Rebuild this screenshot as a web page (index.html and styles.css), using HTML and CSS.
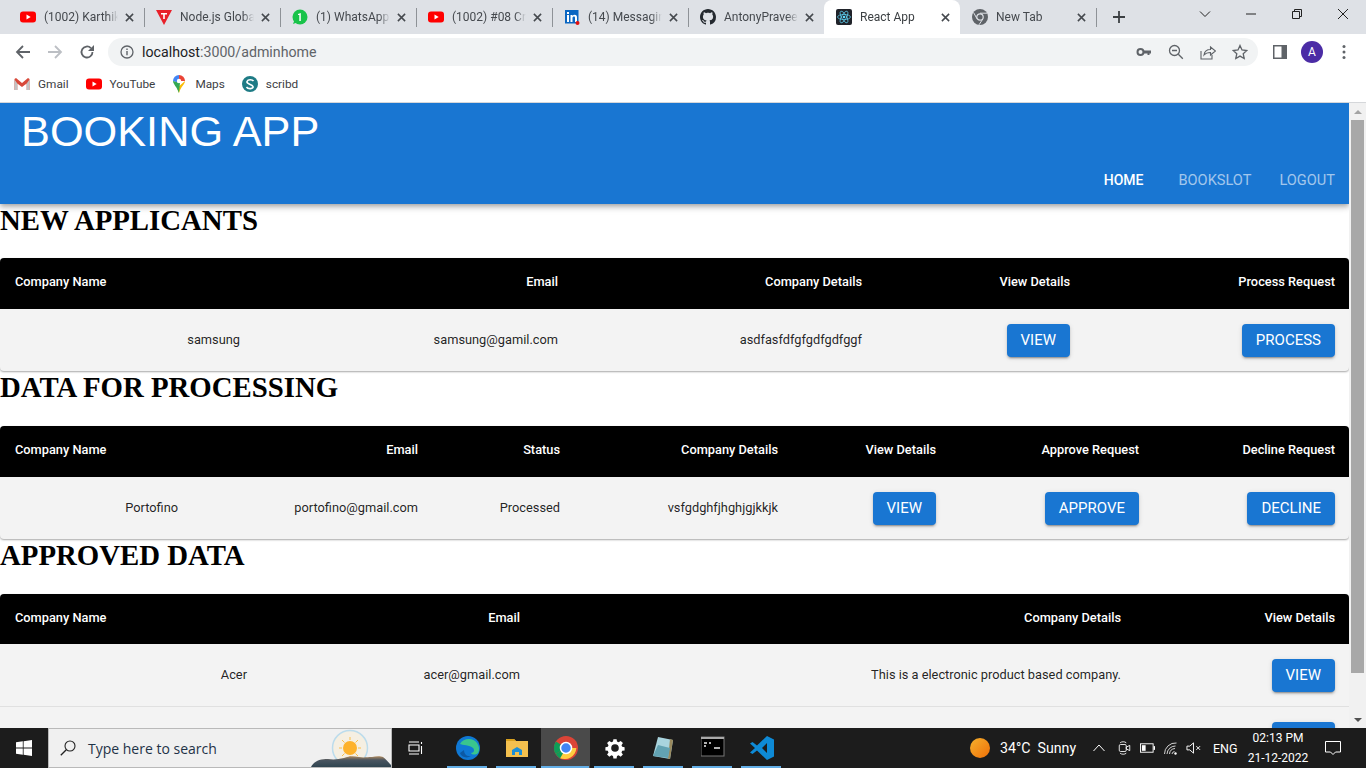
FILE: index.html
```html
<!DOCTYPE html>
<html lang="en">
<head>
<meta charset="utf-8">
<title>React App</title>
<link rel="stylesheet" href="styles.css">
</head>
<body>
<svg class="defs" width="0" height="0">
  <symbol id="yt" viewBox="0 0 16 16"><rect y="2.500" width="16" height="11" rx="3" fill="#f00"/><path d="M6.500 5.500v5l4.200-2.500z" fill="#fff"/></symbol>
  <symbol id="x" viewBox="0 0 10 10"><path d="M1 1l8 8M9 1l-8 8" stroke="#45494e" stroke-width="1.700" fill="none"/></symbol>
</svg>
<div class="window">
  <div class="tabstrip">
    <div class="tab"><svg class="fav"><use href="#yt"/></svg><span class="tab-title">(1002) Karthik</span><svg class="tab-x"><use href="#x"/></svg></div>
    <div class="tab"><svg class="fav" viewBox="0 0 16 16"><path d="M0 1h16L8 16z" fill="#e8202a"/><path d="M5 4h6v1.600H8.800V10H7.200V5.600H5z" fill="#fff"/></svg><span class="tab-title">Node.js Global</span><svg class="tab-x"><use href="#x"/></svg></div>
    <div class="tab"><svg class="fav" viewBox="0 0 16 16"><circle cx="8" cy="8" r="7.500" fill="#19c34a"/><path d="M1 15l1.500-4 2.500 2.500z" fill="#19c34a"/><path d="M8.800 4v8H7.300V6H6V5z" fill="#fff"/></svg><span class="tab-title">(1) WhatsApp</span><svg class="tab-x"><use href="#x"/></svg></div>
    <div class="tab"><svg class="fav"><use href="#yt"/></svg><span class="tab-title">(1002) #08 Cre</span><svg class="tab-x"><use href="#x"/></svg></div>
    <div class="tab"><svg class="fav" viewBox="0 0 16 16"><rect x="1" y="1" width="13.500" height="13.500" fill="#0a66c2"/><path d="M3 6h2v7H3zM3 3h2v2H3zM6.500 6h2v1c.5-.8 1.200-1.200 2.200-1.200 1.500 0 2.300 1 2.300 2.700V13h-2V9c0-.9-.4-1.400-1.100-1.400S8.500 8.200 8.500 9v4h-2z" fill="#fff"/><circle cx="13.500" cy="14" r="2" fill="#e01010"/></svg><span class="tab-title">(14) Messaging</span><svg class="tab-x"><use href="#x"/></svg></div>
    <div class="tab"><svg class="fav" viewBox="0 0 16 16"><path fill="#24292f" d="M8 0C3.580 0 0 3.580 0 8c0 3.540 2.290 6.530 5.470 7.590.4.070.55-.17.55-.38 0-.19-.01-.82-.01-1.490-2.010.37-2.530-.49-2.690-.94-.09-.23-.48-.94-.82-1.130-.28-.15-.68-.52-.01-.53.630-.01 1.080.58 1.230.82.720 1.210 1.870.87 2.330.66.070-.52.280-.87.510-1.070-1.780-.2-3.640-.89-3.640-3.950 0-.87.310-1.590.82-2.150-.08-.2-.36-1.020.08-2.120 0 0 .67-.21 2.200.82.640-.18 1.320-.27 2-.27s1.360.09 2 .27c1.530-1.040 2.200-.82 2.200-.82.440 1.100.16 1.920.08 2.120.51.560.82 1.270.82 2.150 0 3.070-1.870 3.750-3.650 3.950.29.250.54.730.54 1.480 0 1.070-.01 1.930-.01 2.200 0 .21.150.46.550.38A8.010 8.010 0 0016 8c0-4.420-3.580-8-8-8z"/></svg><span class="tab-title">AntonyPraveen</span><svg class="tab-x"><use href="#x"/></svg></div>
    <div class="tab active"><svg class="fav" viewBox="0 0 16 16"><rect width="16" height="16" rx="2" fill="#20232a"/><g fill="none" stroke="#61dafb" stroke-width=".7"><ellipse cx="8" cy="8" rx="6.500" ry="2.500"/><ellipse cx="8" cy="8" rx="6.500" ry="2.500" transform="rotate(60 8 8)"/><ellipse cx="8" cy="8" rx="6.500" ry="2.500" transform="rotate(120 8 8)"/></g><circle cx="8" cy="8" r="1.300" fill="#61dafb"/></svg><span class="tab-title">React App</span><svg class="tab-x"><use href="#x"/></svg></div>
    <div class="tab"><svg class="fav" viewBox="0 0 16 16"><circle cx="8" cy="8" r="8" fill="#5f6368"/><circle cx="8" cy="8" r="3.200" fill="#5f6368" stroke="#dee1e6" stroke-width="1.200"/><path d="M8 4.200h7M5 9.800L1.600 3.600M10.800 10L7 15.800" stroke="#dee1e6" stroke-width="1"/></svg><span class="tab-title">New Tab</span><svg class="tab-x"><use href="#x"/></svg></div>
    <svg class="newtab" viewBox="0 0 12 12"><path d="M6 0v12M0 6h12" stroke="#3c4043" stroke-width="1.800"/></svg>
    <div class="winctl">
      <svg class="ctl" viewBox="0 0 12 12"><path d="M1 3.500l5 5 5-5" stroke="#222" fill="none"/></svg>
      <svg class="ctl" viewBox="0 0 12 12"><path d="M1 6h10" stroke="#222" fill="none"/></svg>
      <svg class="ctl" viewBox="0 0 12 12"><path d="M1.500 3.500h7v7h-7zM3.500 3.500v-2h7v7h-2" stroke="#222" fill="none"/></svg>
      <svg class="ctl" viewBox="0 0 12 12"><path d="M1 1l10 10M11 1L1 11" stroke="#222" fill="none"/></svg>
    </div>
  </div>

  <div class="toolbar">
    <svg class="nav-ic" viewBox="0 0 16 16"><path d="M15 8H2M8 2L2 8l6 6" stroke="#5f6368" stroke-width="1.800" fill="none"/></svg>
    <svg class="nav-ic" viewBox="0 0 16 16"><path d="M1 8h13M8 2l6 6-6 6" stroke="#bcbfc4" stroke-width="1.800" fill="none"/></svg>
    <svg class="nav-ic" viewBox="0 0 16 16"><path d="M13.500 8a5.500 5.500 0 11-1.600-3.900" stroke="#5f6368" stroke-width="1.800" fill="none"/><path d="M15 1v6H9z" fill="#5f6368"/></svg>
    <div class="omnibox">
      <svg class="info" viewBox="0 0 14 14"><circle cx="7" cy="7" r="6" stroke="#5f6368" stroke-width="1.300" fill="none"/><path d="M6.300 6h1.400v4.200H6.300zM6.300 3.600h1.400V5H6.300z" fill="#5f6368"/></svg>
      <span class="url"><b>localhost</b>:3000/adminhome</span>
      <span class="omni-space"></span>
      <svg class="omni-ic" viewBox="0 0 16 16"><circle cx="4.500" cy="8" r="3" stroke="#5f6368" stroke-width="2" fill="none"/><path d="M7 6.500h8v3h-1.500v1.500h-2V9.500H7z" fill="#5f6368"/></svg>
      <svg class="omni-ic" viewBox="0 0 16 16"><circle cx="6.500" cy="6.500" r="5" stroke="#5f6368" stroke-width="1.300" fill="none"/><path d="M4 6.500h5M10.300 10.300l4.500 4.500" stroke="#5f6368" stroke-width="1.300"/></svg>
      <svg class="omni-ic" viewBox="0 0 16 16"><path d="M1 7v8h11v-4" stroke="#5f6368" stroke-width="1.100" fill="none"/><path d="M4 11c.5-3.500 3-5.500 6.500-5.500V3L15.500 7l-5 4V8.500C7.500 8.500 5.500 9.300 4 11z" stroke="#5f6368" stroke-width="1.100" fill="none"/></svg>
      <svg class="omni-ic" viewBox="0 0 16 16"><path d="M8 1.500l2 4.500 4.800.5-3.600 3.200 1 4.800L8 12.100 3.800 14.500l1-4.800L1.200 6.500 6 6z" stroke="#5f6368" stroke-width="1.300" fill="none"/></svg>
    </div>
    <svg class="panel" viewBox="0 0 14 14"><rect width="14" height="14" fill="#5f6368"/><rect x="1.500" y="1.500" width="7" height="11" fill="#fff"/></svg>
    <span class="avatar">A</span>
    <svg class="dots" viewBox="0 0 4 16"><circle cx="2" cy="2.500" r="1.500" fill="#5f6368"/><circle cx="2" cy="8" r="1.500" fill="#5f6368"/><circle cx="2" cy="13.500" r="1.500" fill="#5f6368"/></svg>
  </div>

  <div class="bookmarks">
    <span class="bm bm-gmail"><svg class="bm-ic" viewBox="0 0 16 16"><path d="M.5 3v11h2.800V7.500L8 11l4.700-3.500V14h2.800V3L14 2 8 7 2 2z" fill="#d8493a"/><path d="M3.300 7.500V14H.5V3.500zM12.700 7.500V14h2.800V3.500z" fill="#c3c3c3"/></svg>Gmail</span>
    <span class="bm bm-yt"><svg class="bm-ic"><use href="#yt"/></svg>YouTube</span>
    <span class="bm bm-maps"><svg class="bm-ic pin" viewBox="0 0 14 18"><path d="M7 0a6 6 0 00-6 6L7 8z" fill="#4285f4"/><path d="M7 0a6 6 0 016 6H7z" fill="#ea4335"/><path d="M13 6c0 3.500-4 5-6 12L5 13z" fill="#fbbc04"/><path d="M1 6c0 3 4 6 6 12l1-10z" fill="#34a853"/><circle cx="7" cy="6" r="2.200" fill="#fff"/></svg>Maps</span>
    <span class="bm bm-scribd"><svg class="bm-ic" viewBox="0 0 16 16"><circle cx="8" cy="8" r="8" fill="#1e7b85"/><path d="M11.500 5C10.500 3.500 6 3 5 5.500S10 8 11 10.500 6 13.500 4.500 11" stroke="#fff" stroke-width="1.600" fill="none"/></svg>scribd</span>
  </div>

  <div class="viewport">
    <main class="page">
      <header class="appbar">
        <div class="brand">BOOKING APP</div>
        <nav class="appnav">
          <a class="navlink current">Home</a>
          <a class="navlink second">Bookslot</a>
          <a class="navlink third">Logout</a>
        </nav>
      </header>

      <h2 class="section-title">NEW APPLICANTS</h2>
      <table class="data">
        <colgroup><col class="w254"><col class="w318"><col class="w304"><col class="w208"><col class="w265"></colgroup>
        <thead><tr><th class="left">Company Name</th><th>Email</th><th>Company Details</th><th>View Details</th><th>Process Request</th></tr></thead>
        <tbody><tr><td>samsung</td><td>samsung@gamil.com</td><td>asdfasfdfgfgdfgdfggf</td><td><button class="btn">VIEW</button></td><td><button class="btn">PROCESS</button></td></tr></tbody>
      </table>

      <h2 class="section-title">DATA FOR PROCESSING</h2>
      <table class="data">
        <colgroup><col class="w192"><col class="w240"><col class="w142"><col class="w218"><col class="w158"><col class="w203"><col class="w196"></colgroup>
        <thead><tr><th class="left">Company Name</th><th>Email</th><th>Status</th><th>Company Details</th><th>View Details</th><th>Approve Request</th><th>Decline Request</th></tr></thead>
        <tbody><tr><td>Portofino</td><td>portofino@gmail.com</td><td>Processed</td><td>vsfgdghfjhghjgjkkjk</td><td><button class="btn">VIEW</button></td><td><button class="btn">APPROVE</button></td><td><button class="btn">DECLINE</button></td></tr></tbody>
      </table>

      <h2 class="section-title">APPROVED DATA</h2>
      <table class="data tight">
        <colgroup><col class="w261"><col class="w273"><col class="w601"><col class="w214"></colgroup>
        <thead><tr><th class="left">Company Name</th><th>Email</th><th>Company Details</th><th>View Details</th></tr></thead>
        <tbody>
          <tr><td>Acer</td><td>acer@gmail.com</td><td>This is a electronic product based company.</td><td><button class="btn">VIEW</button></td></tr>
          <tr><td></td><td></td><td></td><td><button class="btn cut" aria-label="View"></button></td></tr>
        </tbody>
      </table>
    </main>
    <div class="scrollbar">
      <div class="sb-btn"><span class="arrow-up"></span></div>
      <div class="sb-thumb"></div>
      <div class="sb-rest"></div>
      <div class="sb-btn"><span class="arrow-down"></span></div>
    </div>
  </div>

  <footer class="taskbar">
    <div class="start"><svg class="win" viewBox="0 0 16 16"><path d="M0 2.300l6.800-1v6.300H0zM7.600 1.200L16 0v7.600H7.600zM0 8.400h6.800v6.300L0 13.700zM7.600 8.400H16V16l-8.400-1.200z" fill="#fff"/></svg></div>
    <div class="search">
      <svg class="lens" viewBox="0 0 16 16"><circle cx="10" cy="6" r="5" stroke="#222" stroke-width="1.100" fill="none"/><path d="M6.300 9.700L.8 15.200" stroke="#222" stroke-width="1.300"/></svg>
      <span class="search-text">Type here to search</span>
      <svg class="search-art" viewBox="0 0 80 38"><defs><linearGradient id="hill" x1="0" y1="0" x2="0" y2="1"><stop offset="0" stop-color="#b08a5e"/><stop offset=".35" stop-color="#4a5560"/><stop offset="1" stop-color="#2f4450"/></linearGradient></defs><circle cx="39" cy="19" r="17.500" fill="#f5efe2" stroke="#bcdcec" stroke-width="1.500"/><circle cx="39" cy="19" r="7" fill="#fdb22c"/><g stroke="#f9c04a" stroke-width="1"><path d="M39 8v3M39 27v3M28 19h3M47 19h3M31 11l2.500 2.500M44.500 24.500L47 27M31 27l2.500-2.500M44.500 13.500L47 11"/></g><path d="M0 38c3-6 9-8 17-8 7 1 10 0 16-1 5-2 9-2 15-1 5 1 8 0 13 0 4-1 9-1 11 0 3 2 5 5 8 8v2z" fill="url(#hill)"/></svg>
    </div>
    <div class="task task-view"><svg class="t-ic" viewBox="0 0 16 16"><path d="M2 2h10M2 14h10M2 5h10v6H2zM14.500 2v2M14.500 6v8" stroke="#fff" stroke-width="1.100" fill="none"/></svg></div>
    <div class="task app"><svg class="t-ic big" viewBox="0 0 24 24"><circle cx="12" cy="12" r="12" fill="#0f78d4"/><path d="M4 8c3-6 13-7 17-1 2 3 3 7 1 10-2 2-6 2-7 0 3 0 4-3 2-5-3-3-11-3-13-4z" fill="#39c58d"/><path d="M8 14c0 4 3 7 7 6-4 3-10 1-11-3z" fill="#0c59a4"/></svg><i></i></div>
    <div class="task app"><svg class="t-ic big" viewBox="0 0 24 24"><path d="M1 3h8l2 2h12v16H1z" fill="#f4c04e"/><path d="M1 3h8l2 2H1z" fill="#d9a11e"/><path d="M7 19v-5l5-3 5 3v5h-3v-3h-4v3z" fill="#1d8fd6"/></svg><i></i></div>
    <div class="task app on"><svg class="t-ic big" viewBox="0 0 24 24"><circle cx="12" cy="12" r="12" fill="#db4437"/><path d="M12 12L1.600 18A12 12 0 012 5.400z" fill="#0f9d58"/><path d="M12 12l10.400 0A12 12 0 015.500 22z" fill="#ffcd40"/><path d="M12 12L1.600 18A12 12 0 006 22.400z" fill="#0f9d58"/><circle cx="12" cy="12" r="5.500" fill="#4285f4" stroke="#fff" stroke-width="1.500"/></svg><i></i></div>
    <div class="task app"><svg class="t-ic big" viewBox="0 0 24 24"><path d="M10 1h4l.5 3 2 .9 2.600-1.800 2.800 2.800-1.800 2.600.9 2 3 .5v4l-3 .5-.9 2 1.800 2.600-2.800 2.800-2.600-1.800-2 .9-.5 3h-4l-.5-3-2-.9-2.600 1.800-2.800-2.800 1.800-2.600-.9-2-3-.5v-4l3-.5.9-2-1.800-2.600L4.900 3.100l2.600 1.800 2-.9z" fill="#fff" transform="translate(2.400 2.400) scale(.8)"/><circle cx="12" cy="12" r="3.800" fill="#1e1e1e"/></svg><i></i></div>
    <div class="task app"><svg class="t-ic big" viewBox="0 0 24 24"><path d="M6 1l15 3-3 19L1 20z" fill="#a9d4de"/><path d="M18 3l3 1-3 19-2-.4z" fill="#9a8a5e"/><path d="M1 20L6 9l12 3-2 10z" fill="#62a2b2"/></svg><i></i></div>
    <div class="task app"><svg class="t-ic big" viewBox="0 0 24 24"><rect y="1" width="23" height="19" fill="#000" stroke="#777"/><rect y="1" width="23" height="2" fill="#aaa"/><path d="M3 7h3M3 10h2M8 7h2M13 12h6" stroke="#eee" stroke-width="1.300"/></svg><i></i></div>
    <div class="task app"><svg class="t-ic big" viewBox="0 0 24 24"><path d="M17 0l7 3.500v17L17 24 7 14.500 2.500 18 0 16.500 5 12 0 7.500 2.500 6 7 9.500zm0 7l-5 5 5 5z" fill="#0e8ad6"/></svg><i></i></div>

    <div class="tray">
      <span class="sun"></span>
      <span class="weather">34°C&nbsp; Sunny</span>
      <svg class="tr-ic caret" viewBox="0 0 12 8"><path d="M.5 7l5.500-6 5.500 6" stroke="#fff" fill="none"/></svg>
      <svg class="tr-ic" viewBox="0 0 14 16"><rect x="1" y="4" width="8" height="8" rx="1.500" stroke="#fff" fill="none"/><path d="M9 7l4-2v6l-4-2zM2 2c2-1.500 5-1.500 7 0M2 14c2 1.500 5 1.500 7 0" stroke="#fff" fill="none"/></svg>
      <svg class="tr-ic" viewBox="0 0 16 10"><rect x=".5" y=".5" width="13.500" height="9" stroke="#fff" fill="none"/><rect x="2" y="2" width="4" height="6" fill="#fff"/><rect x="14.500" y="3" width="1.500" height="4" fill="#fff"/></svg>
      <svg class="tr-ic" viewBox="0 0 14 14"><path d="M1 13a11 11 0 0112-11M3.500 13a8.500 8.500 0 018.500-8M6 13a6 6 0 015.500-5.500M8.500 13A3 3 0 0111 10.500" stroke="#fff" fill="none" opacity=".8"/><circle cx="12" cy="12.500" r="1.200" fill="#fff"/></svg>
      <svg class="tr-ic" viewBox="0 0 16 12"><path d="M1 4h3l4-3.500v11L4 8H1z" stroke="#fff" fill="none"/><path d="M11 4l4 4M15 4l-4 4" stroke="#fff"/></svg>
      <span class="lang">ENG</span>
      <div class="clock"><span>02:13 PM</span><span>21-12-2022</span></div>
      <svg class="notif" viewBox="0 0 16 16"><path d="M.5 1.500h15v10.500h-5L8 14.500 5.500 12h-5z" stroke="#fff" fill="none"/></svg>
    </div>
  </footer>
</div>
</body>
</html>
```
FILE: styles.css
```css
* { box-sizing: border-box; }
html, body { margin: 0; height: 100%; overflow: hidden; background: #fff; }
.defs { display: block; height: 0; }
svg { display: block; flex: none; }
.window { display: flex; flex-direction: column; width: 1366px; height: 768px; font-family: Roboto, sans-serif; }

/* tab strip */
.tabstrip { display: flex; align-items: center; height: 34px; padding-left: 8px; background: #dee1e6; flex: none; }
.tab { position: relative; display: flex; align-items: center; width: 136px; height: 34px; padding: 0 10px 0 12px; font-size: 12px; color: #45494e; }
.tab::after { content: ""; position: absolute; right: -1px; top: 8px; height: 19px; width: 1px; background: #8e9297; }
.tab.active { background: #fff; border-radius: 8px 8px 0 0; color: #3c4043; }
.tab.active::after { display: none; }
.tab:nth-child(6)::after { display: none; }
.fav { width: 16px; height: 16px; margin-right: 8px; }
.tab-title { flex: 1; white-space: nowrap; overflow: hidden; -webkit-mask-image: linear-gradient(90deg, #000 85%, transparent); mask-image: linear-gradient(90deg, #000 85%, transparent); }
.tab-x { width: 9px; height: 9px; margin-left: 7px; }
.newtab { width: 12px; height: 12px; margin-left: 17px; }
.winctl { display: flex; margin-left: auto; padding-right: 17px; gap: 34px; }
.ctl { width: 12px; height: 12px; margin-top: -6px; }

/* toolbar */
.toolbar { display: flex; align-items: center; height: 36px; background: #fff; flex: none; padding-left: 15px; }
.nav-ic { width: 16px; height: 16px; margin-right: 16px; }
.omnibox { display: flex; align-items: center; width: 1150px; height: 28px; margin-left: -3px; padding: 0 10px 0 12px; background: #f1f3f4; border-radius: 14px; }
.info { width: 14px; height: 14px; margin-right: 8px; }
.url { font-size: 14.2px; color: #5f6368; }
.url b { font-weight: 400; color: #202124; }
.omni-space { flex: 1; }
.omni-ic { width: 16px; height: 16px; margin-left: 16px; }
.panel { width: 14px; height: 14px; margin-left: 15px; }
.avatar { display: flex; align-items: center; justify-content: center; width: 22px; height: 22px; margin-left: 14px; border-radius: 50%; background: #4b2ca5; color: #fff; font-size: 12px; }
.dots { width: 4px; height: 16px; margin-left: 19px; }

/* bookmarks */
.bookmarks { display: flex; align-items: center; height: 33px; padding: 0 0 4px 14px; background: #fff; border-bottom: 1px solid #d5d7da; flex: none; }
.bm { display: flex; align-items: center; font-size: 11.8px; color: #3c4043; }
.bm-ic { width: 16px; height: 16px; margin-right: 8px; }
.bm-ic.pin { width: 14px; height: 18px; margin-right: 9px; }
.bm-yt, .bm-maps, .bm-scribd { margin-left: 17px; }

/* page */
.viewport { display: flex; flex: 1; min-height: 0; }
.page { flex: 1; min-width: 0; overflow: hidden; font-family: "Liberation Serif", serif; }
.appbar { display: flex; flex-direction: column; height: 101px; background: #1976d2; color: #fff; box-shadow: 0 2px 4px -1px rgba(0,0,0,.2), 0 4px 5px rgba(0,0,0,.14), 0 1px 10px rgba(0,0,0,.12); font-family: "Liberation Sans", sans-serif; }
.brand { font-size: 43.3px; line-height: 50px; padding: 3px 0 0 21px; }
.appnav { display: flex; justify-content: flex-end; align-items: baseline; margin-top: auto; padding: 0 14px 15px 0; font-family: Roboto, sans-serif; font-size: 14.6px; font-weight: 400; line-height: 18px; }
.navlink { text-transform: uppercase; color: rgba(255,255,255,.6); }
.navlink.current { color: #fff; font-size: 14px; font-weight: 500; }
.second { margin-left: 35px; }
.third { margin-left: 28px; }
.section-title { margin: 0 0 22px; font-size: 28.8px; line-height: 32px; font-weight: 700; color: #000; }
.data { width: 1349px; table-layout: fixed; border-collapse: separate; border-spacing: 0; border-radius: 4px; overflow: hidden; box-shadow: 0 1px 2px rgba(0,0,0,.35); font-family: Roboto, sans-serif; font-size: 12.8px; line-height: 20px; background: #f3f3f3; color: rgba(0,0,0,.87); }
.data th { height: 51px; padding: 0 14px 3px 15px; background: #000; color: #fff; font-weight: 500; text-align: right; }
.data th.left { text-align: left; }
.data td { height: 63px; padding: 0 14px 1px 15px; text-align: right; border-bottom: 1px solid #e0e0e0; }
.data tbody tr:last-child td { height: 62px; padding-bottom: 0; border-bottom: 0; }
.data.tight th { height: 50px; padding-bottom: 2px; }
.data.tight td { padding-bottom: 0; }
.data + .section-title { margin: 0 0 23px; }
.btn { height: 33px; padding: 0 14px; border: 0; border-radius: 4px; background: #1976d2; color: #fff; font-family: Roboto, sans-serif; font-size: 15px; font-weight: 400; box-shadow: 0 3px 1px -2px rgba(0,0,0,.2), 0 2px 2px rgba(0,0,0,.14), 0 1px 5px rgba(0,0,0,.12); vertical-align: middle; }
.btn.cut { width: 63px; }
.w142 { width: 142px; } .w158 { width: 158px; } .w192 { width: 192px; } .w196 { width: 196px; }
.w203 { width: 203px; } .w208 { width: 208px; } .w214 { width: 214px; } .w218 { width: 218px; }
.w240 { width: 240px; } .w254 { width: 254px; } .w261 { width: 261px; } .w265 { width: 265px; }
.w273 { width: 273px; } .w304 { width: 304px; } .w318 { width: 318px; } .w601 { width: 601px; }

/* scrollbar */
.scrollbar { display: flex; flex-direction: column; width: 17px; background: #f1f1f1; flex: none; }
.sb-btn { display: flex; align-items: center; justify-content: center; height: 17px; flex: none; }
.arrow-up { border: 4px solid transparent; border-top: 0; border-bottom: 4px solid #a3a3a3; }
.arrow-down { border: 4px solid transparent; border-bottom: 0; border-top: 4px solid #505050; }
.sb-thumb { width: 13px; height: 553px; margin-left: 2px; background: #a8a8a8; flex: none; }
.sb-rest { flex: 1; }

/* taskbar */
.taskbar { display: flex; align-items: center; height: 40px; background: #1c1c1c; color: #fff; flex: none; font-size: 13px; }
.start { display: flex; align-items: center; justify-content: center; width: 48px; height: 40px; }
.win { width: 16px; height: 16px; }
.search { position: relative; display: flex; align-items: center; width: 344px; height: 40px; padding-left: 11px; background: #f0f0f0; border: 1px solid #b9b9b9; overflow: hidden; color: #1f3347; font-family: "Open Sans", sans-serif; font-size: 14px; }
.lens { width: 16px; height: 16px; margin-right: 12px; }
.search-text { white-space: nowrap; }
.search-art { position: absolute; right: 0; top: 0; width: 80px; height: 38px; }
.task { position: relative; display: flex; align-items: center; justify-content: center; width: 49px; height: 40px; }
.task-view { margin-right: 2px; padding-right: 4px; }
.t-ic { width: 16px; height: 16px; }
.t-ic.big { width: 24px; height: 24px; }
.task i { position: absolute; left: 4px; right: 5px; bottom: 0; height: 2px; background: #63aee6; }
.task.on { background: #4a4a4a; }
.task.on i { left: 0; right: 1px; }
.tray { display: flex; align-items: center; margin-left: auto; height: 40px; padding-right: 25px; }
.sun { width: 20px; height: 20px; margin-right: 10px; border-radius: 50%; background: linear-gradient(135deg, #f6b12d, #ee6f08); }
.weather { width: 93px; white-space: nowrap; font-size: 14.2px; }
.tr-ic { width: 15px; height: 14px; margin-right: 8px; }
.caret { width: 12px; height: 8px; margin-right: 12px; }
.lang { width: 29px; margin-left: 4px; font-size: 12.5px; }
.clock { display: flex; flex-direction: column; align-items: center; width: 72px; font-size: 12px; line-height: 20px; }
.notif { width: 16px; height: 16px; margin-left: 11px; }
```
